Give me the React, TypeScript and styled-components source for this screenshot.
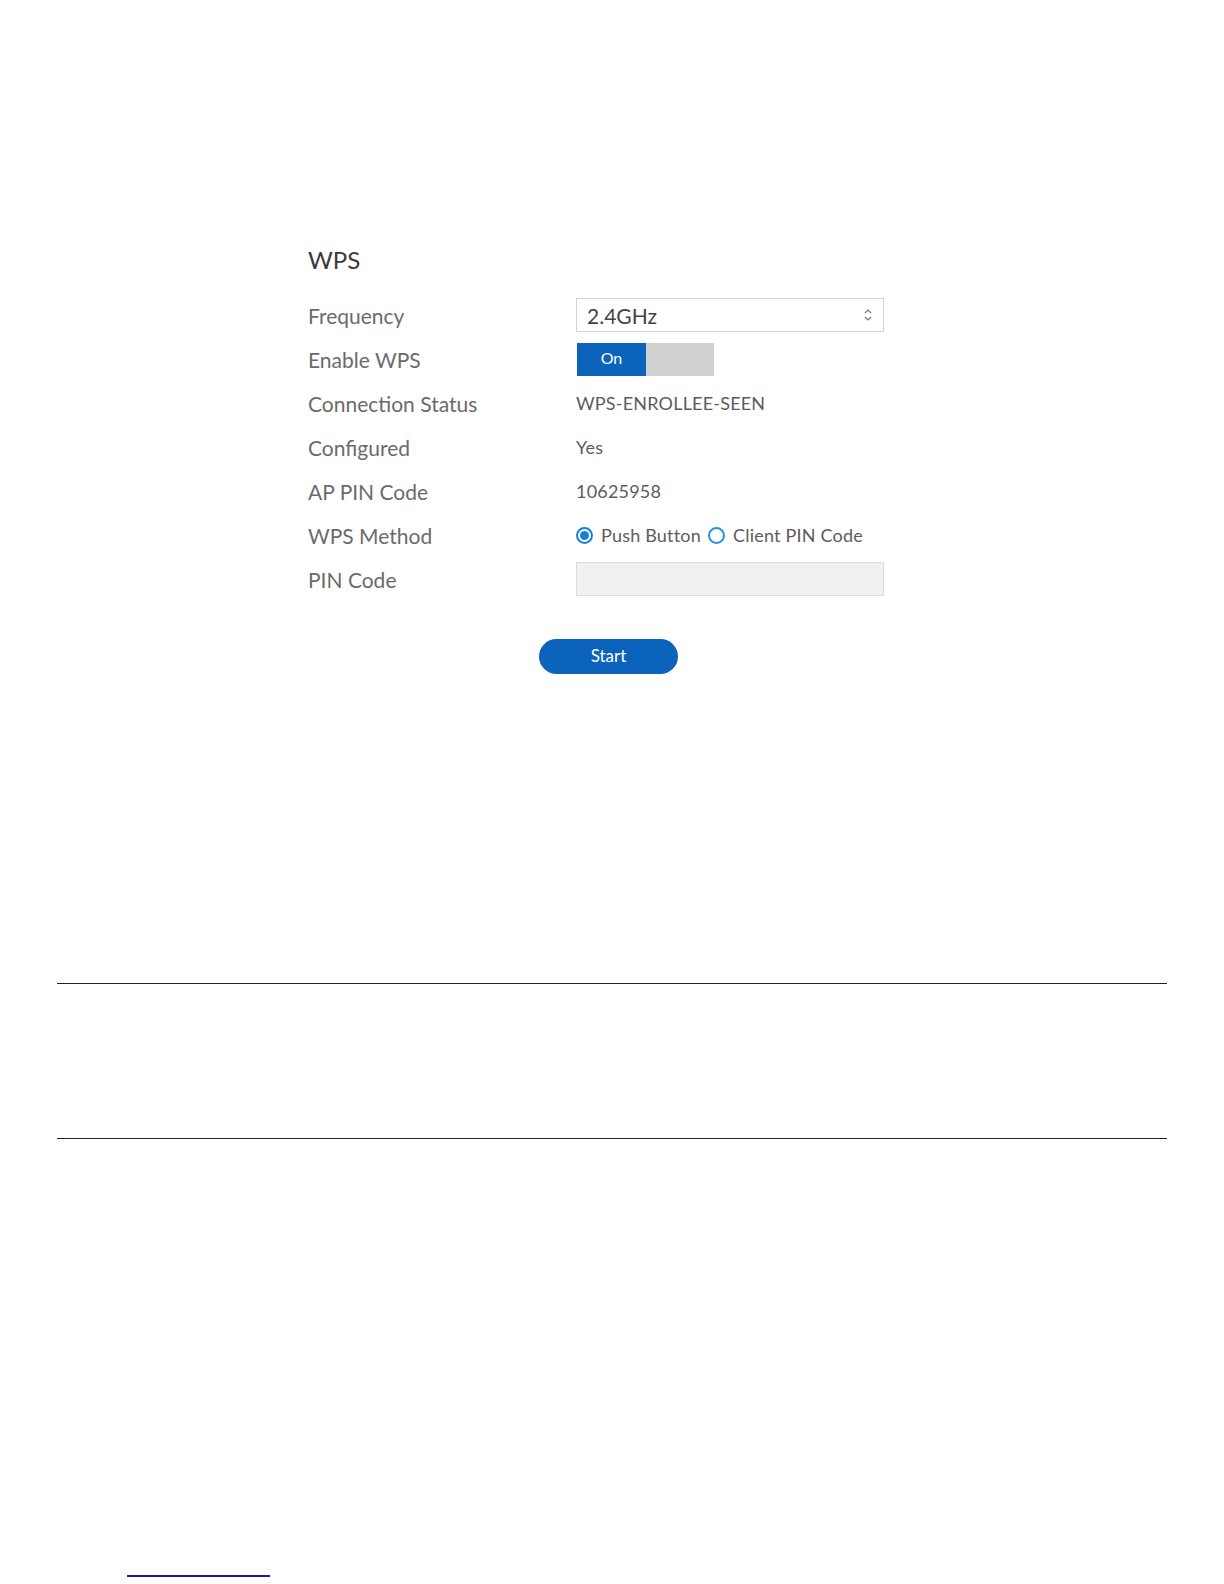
import React from "react";
import styled, { createGlobalStyle } from "styled-components";

const Global = createGlobalStyle`
  html, body { margin: 0; padding: 0; background: #ffffff; }
  body { font-family: Lato, "Open Sans", sans-serif; }
`;

const Page = styled.div`
  width: 1224px;
  height: 1584px;
  display: flex;
  flex-direction: column;
  box-sizing: border-box;
  padding-top: 247px;
`;

const Panel = styled.section`
  margin-left: 308px;
  width: 576px;
  display: flex;
  flex-direction: column;
`;

const Title = styled.h2`
  margin: 0 0 21px 0;
  height: 25px;
  line-height: 25px;
  font-size: 24px;
  font-weight: 400;
  color: #3a3a3a;
`;

const Form = styled.div`
  display: grid;
  grid-template-columns: 268px 308px;
  grid-auto-rows: 44px;
  align-items: center;
`;

const Label = styled.div`
  font-size: 21px;
  color: #6b6b6b;
  white-space: nowrap;
`;

const Value = styled.div`
  font-size: 18px;
  letter-spacing: 0.2px;
  color: #5c5c5c;
  white-space: nowrap;
  display: flex;
  align-items: center;
`;

const SelectBox = styled.div`
  box-sizing: border-box;
  height: 34px;
  width: 308px;
  border: 1px solid #d4d4d4;
  display: flex;
  align-items: center;
  justify-content: space-between;
  padding: 0 10px 0 10px;
  font-size: 21px;
  color: #444;
`;

const Toggle = styled.div`
  display: flex;
  width: 137px;
  height: 33px;
  margin-left: 1px;
`;

const ToggleHalf = styled.div<{ $on?: boolean }>`
  flex: 0 0 ${(p) => (p.$on ? "69px" : "68px")};
  background: ${(p) => (p.$on ? "#0b63bb" : "#d0d0d0")};
  color: #fff;
  font-size: 16px;
  display: flex;
  align-items: center;
  justify-content: center;
  padding-bottom: 3px;
  box-sizing: border-box;
`;

const Radio = styled.span<{ $checked?: boolean }>`
  box-sizing: border-box;
  width: 17px;
  height: 17px;
  border-radius: 50%;
  border: 2px solid ${(p) => (p.$checked ? "#1a7fd0" : "#2b93dc")};
  display: inline-flex;
  align-items: center;
  justify-content: center;
  margin-right: 8px;
  &::after {
    content: "";
    width: 9px;
    height: 9px;
    border-radius: 50%;
    background: ${(p) => (p.$checked ? "#1a7fd0" : "transparent")};
  }
`;

const RadioText = styled.span`
  margin-right: 7px;
`;

const PinInput = styled.div`
  box-sizing: border-box;
  width: 308px;
  height: 34px;
  background: #f1f1f3;
  border: 1px solid #dcdcdc;
`;

const StartButton = styled.button`
  margin: 38px 0 0 231px;
  width: 139px;
  height: 35px;
  border: none;
  border-radius: 18px;
  background: #0b63bb;
  color: #fff;
  font-family: Lato, "Open Sans", sans-serif;
  font-size: 17px;
  padding: 0 0 3px 0;
  cursor: pointer;
`;

const Rule = styled.hr`
  margin: 0 0 0 57px;
  width: 1110px;
  border: none;
  border-top: 1px solid #222;
  height: 0;
`;

const Spacer = styled.div<{ $h: number }>`
  height: ${(p) => p.$h}px;
  flex: none;
`;

const FootLink = styled.div`
  margin-left: 127px;
  width: 143px;
  border-top: 2px solid #1b1b96;
`;

const Chevrons = () => (
  <svg width="10" height="16" viewBox="0 0 10 16" fill="none" stroke="#777" strokeWidth="1.2">
    <path d="M2 6 L5 3 L8 6" />
    <path d="M2 10 L5 13 L8 10" />
  </svg>
);

export default function App() {
  return (
    <>
      <Global />
      <Page>
        <Panel>
          <Title>WPS</Title>
          <Form>
            <Label>Frequency</Label>
            <SelectBox>
              <span>2.4GHz</span>
              <Chevrons />
            </SelectBox>
            <Label>Enable WPS</Label>
            <Toggle>
              <ToggleHalf $on>On</ToggleHalf>
              <ToggleHalf />
            </Toggle>
            <Label>Connection Status</Label>
            <Value>WPS-ENROLLEE-SEEN</Value>
            <Label>Configured</Label>
            <Value>Yes</Value>
            <Label>AP PIN Code</Label>
            <Value>10625958</Value>
            <Label>WPS Method</Label>
            <Value>
              <Radio $checked />
              <RadioText>Push Button</RadioText>
              <Radio />
              <span>Client PIN Code</span>
            </Value>
            <Label>PIN Code</Label>
            <PinInput />
          </Form>
          <StartButton>Start</StartButton>
        </Panel>
        <Spacer $h={309} />
        <Rule />
        <Spacer $h={154} />
        <Rule />
        <Spacer $h={436} />
        <FootLink />
      </Page>
    </>
  );
}
